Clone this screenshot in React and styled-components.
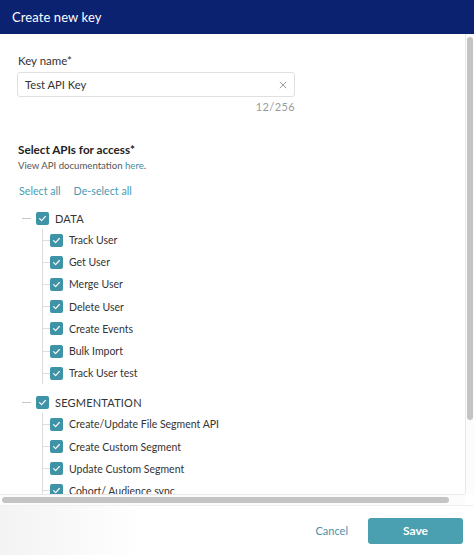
import React from "react";
import styled, { createGlobalStyle } from "styled-components";

const Global = createGlobalStyle`
  html, body { margin: 0; padding: 0; background: #fff; }
  body { font-family: Lato, "Open Sans", sans-serif; color: #333; }
  * { box-sizing: border-box; }
`;

const Modal = styled.div`
  width: 474px;
  height: 555px;
  display: flex;
  flex-direction: column;
  background: #fff;
  overflow: hidden;
`;

const Header = styled.div`
  height: 34px;
  flex: none;
  background: #0b2271;
  color: #fff;
  font-size: 13px;
  display: flex;
  align-items: center;
  padding-left: 12px;
  letter-spacing: 0.1px;
`;

const Body = styled.div`
  flex: 1;
  min-height: 0;
  display: grid;
  grid-template-columns: 1fr 9px;
  grid-template-rows: 1fr 11px;
`;

const Viewport = styled.div`
  overflow: hidden;
  min-height: 0;
`;

const VTrack = styled.div`
  border-left: 1px solid #e9e9e9;
  background: #fcfcfc;
  padding: 3px 0 0 1px;
`;

const HTrack = styled.div`
  border-top: 1px solid #e9e9e9;
  background: #fcfcfc;
  padding: 2px 0 0 2px;
`;

const Corner = styled.div`
  background: #fff;
`;

const Thumb = styled.div`
  background: #c4c4c4;
  border-radius: 3px;
  width: ${(p) => (p.$vertical ? "6px" : `${p.$size}px`)};
  height: ${(p) => (p.$vertical ? `${p.$size}px` : "6px")};
`;

const Content = styled.div`
  width: 465px;
  padding: 19px 18px 40px;
`;

const Label = styled.div`
  font-size: 11.5px;
  line-height: 16px;
  color: #333;
  margin-bottom: 3px;
`;

const Field = styled.div`
  width: 278px;
  margin-left: -1px;
`;

const InputBox = styled.div`
  height: 25px;
  border: 1px solid #e0e0e0;
  border-radius: 3px;
  display: flex;
  align-items: center;
  padding: 0 7px;
  font-size: 11.2px;
  color: #333;
`;

const InputText = styled.span`
  flex: 1;
`;

const Clear = styled.span`
  display: flex;
  align-items: center;
`;

const Counter = styled.div`
  text-align: right;
  font-size: 11px;
  line-height: 14px;
  letter-spacing: 0.4px;
  color: #9a9a9a;
  margin-top: 3px;
`;

const Heading = styled.div`
  font-size: 11.7px;
  font-weight: 700;
  line-height: 16px;
  color: #222;
  margin-top: 27px;
`;

const Hint = styled.div`
  font-size: 9.6px;
  line-height: 14px;
  color: #555;
  margin-top: 2px;
`;

const Link = styled.a`
  color: #3e8fa6;
  text-decoration: none;
`;

const Actions = styled.div`
  display: flex;
  gap: 13px;
  margin-top: 10px;
  padding-left: 1px;
`;

const ActionLink = styled.span`
  font-size: 10.7px;
  line-height: 16px;
  color: #4a9bb2;
`;

const Tree = styled.div`
  margin-top: 8px;
  padding-left: 4px;
`;

const GroupRow = styled.div`
  height: 22px;
  display: flex;
  align-items: center;
`;

const Dash = styled.span`
  width: 9px;
  height: 1px;
  background: #c8c8c8;
  margin-right: 5px;
`;

const Box = styled.span`
  width: 13px;
  height: 13px;
  border-radius: 2px;
  background: #3f93a7;
  display: inline-flex;
  align-items: center;
  justify-content: center;
  flex: none;
`;

const GroupLabel = styled.span`
  font-size: 11px;
  color: #333;
  margin-left: 6px;
  letter-spacing: 0.2px;
`;

const Children = styled.div`
  margin-left: 20px;
  border-left: 1px solid #dcdcdc;
  margin-bottom: 7px;
`;

const ChildRow = styled.div`
  height: 22.2px;
  display: flex;
  align-items: center;
`;

const Connector = styled.span`
  width: 7px;
  height: 1px;
  background: #dcdcdc;
`;

const ChildLabel = styled.span`
  font-size: 10.5px;
  color: #333;
  margin-left: 6px;
`;

const Footer = styled.div`
  height: 50px;
  flex: none;
  display: flex;
  align-items: center;
  justify-content: flex-end;
  gap: 20px;
  padding-right: 11px;
  border-top: 1px solid #f0f0f0;
  background: linear-gradient(to right, #f3f3f3 0%, #ffffff 30%);
`;

const Cancel = styled.span`
  font-size: 11px;
  color: #4b90a8;
`;

const SaveButton = styled.button`
  width: 95px;
  height: 26px;
  border: none;
  border-radius: 3px;
  background: #4a9fb0;
  color: #fff;
  font-family: inherit;
  font-size: 12px;
  font-weight: 700;
  cursor: pointer;
`;

const Check = () => (
  <svg width="9" height="9" viewBox="0 0 10 10">
    <path d="M1.8 5.2 L4 7.3 L8.2 2.8" fill="none" stroke="#fff" strokeWidth="1.3" strokeLinecap="round" strokeLinejoin="round" />
  </svg>
);

const groups = [
  {
    name: "DATA",
    items: ["Track User", "Get User", "Merge User", "Delete User", "Create Events", "Bulk Import", "Track User test"],
  },
  {
    name: "SEGMENTATION",
    items: [
      "Create/Update File Segment API",
      "Create Custom Segment",
      "Update Custom Segment",
      "Cohort/ Audience sync",
    ],
  },
];

export default function App() {
  return (
    <>
      <Global />
      <Modal>
        <Header>Create new key</Header>
        <Body>
          <Viewport>
            <Content>
              <Label>Key name*</Label>
              <Field>
                <InputBox>
                  <InputText>Test API Key</InputText>
                  <Clear>
                    <svg width="8" height="8" viewBox="0 0 10 10">
                      <path d="M1 1 L9 9 M9 1 L1 9" stroke="#999" strokeWidth="1.2" />
                    </svg>
                  </Clear>
                </InputBox>
                <Counter>12/256</Counter>
              </Field>
              <Heading>Select APIs for access*</Heading>
              <Hint>
                View API documentation <Link>here</Link>.
              </Hint>
              <Actions>
                <ActionLink>Select all</ActionLink>
                <ActionLink>De-select all</ActionLink>
              </Actions>
              <Tree>
                {groups.map((g) => (
                  <div key={g.name}>
                    <GroupRow>
                      <Dash />
                      <Box><Check /></Box>
                      <GroupLabel>{g.name}</GroupLabel>
                    </GroupRow>
                    <Children>
                      {g.items.map((it) => (
                        <ChildRow key={it}>
                          <Connector />
                          <Box><Check /></Box>
                          <ChildLabel>{it}</ChildLabel>
                        </ChildRow>
                      ))}
                    </Children>
                  </div>
                ))}
              </Tree>
            </Content>
          </Viewport>
          <VTrack>
            <Thumb $vertical $size={383} />
          </VTrack>
          <HTrack>
            <Thumb $size={447} />
          </HTrack>
          <Corner />
        </Body>
        <Footer>
          <Cancel>Cancel</Cancel>
          <SaveButton>Save</SaveButton>
        </Footer>
      </Modal>
    </>
  );
}
